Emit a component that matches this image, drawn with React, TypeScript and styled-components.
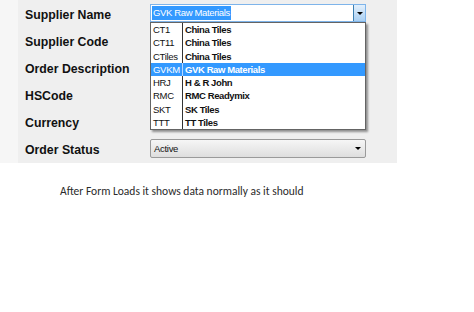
import React from 'react';
import styled, { createGlobalStyle } from 'styled-components';

const GlobalStyle = createGlobalStyle`
  html, body {
    margin: 0;
    padding: 0;
    background: #ffffff;
  }
  body {
    font-family: Arial, "Liberation Sans", sans-serif;
  }
`;

const sans = `Arial, "Liberation Sans", sans-serif`;

// Layout
const Page = styled.div`
  width: 474px;
  height: 312px;
  background: #ffffff;
  overflow: hidden;
`;

const Panel = styled.div`
  display: flex;
  width: 397px;
  height: 163px;
  background: #efefef;
`;

const Strip = styled.div`
  width: 18px;
  background: #f6f6f6;
`;

const Form = styled.div`
  display: grid;
  grid-template-columns: 125px 216px;
  grid-auto-rows: 27px;
  padding: 1px 0 0 7px;
`;

const Label = styled.div`
  display: flex;
  align-items: center;
  font-family: ${sans};
  font-weight: bold;
  font-size: 12.3px;
  color: #111111;
`;

const Field = styled.div`
  position: relative;
`;

// Supplier combo (open)
const Combo = styled.div`
  display: flex;
  align-items: center;
  margin-top: 3px;
  height: 16px;
  background: #ffffff;
  border: 1px solid #7eb4ea;
`;

const Selected = styled.span`
  flex: 1;
  display: flex;
  align-items: center;
`;

const SelText = styled.span`
  margin-left: 1px;
  padding: 0 1px;
  line-height: 14px;
  background: #3399ff;
  color: #ffffff;
  font-family: ${sans};
  font-size: 9.5px;
  letter-spacing: -0.35px;
`;

const DropButton = styled.span`
  width: 11px;
  height: 16px;
  display: flex;
  align-items: center;
  justify-content: center;
  border-left: 1px solid #3c7fb1;
  background: linear-gradient(#e3f0fc, #a9cff2);
`;

const Arrow = styled.span`
  width: 0;
  height: 0;
  border-left: 3px solid transparent;
  border-right: 3px solid transparent;
  border-top: 3px solid #000000;
`;

const List = styled.div`
  position: absolute;
  top: 21px;
  left: 0;
  width: 214px;
  border: 1px solid #646464;
  background: #ffffff;
  box-shadow: 2px 2px 2px rgba(0, 0, 0, 0.4);
  z-index: 2;
`;

const Item = styled.div<{ $active?: boolean }>`
  display: flex;
  height: 13.25px;
  line-height: 13.25px;
  font-family: ${sans};
  font-size: 9.5px;
  background: ${(p) => (p.$active ? '#3399ff' : '#ffffff')};
  color: ${(p) => (p.$active ? '#ffffff' : '#111111')};
`;

const Code = styled.span<{ $active?: boolean }>`
  width: 29px;
  padding-left: 2px;
  letter-spacing: -0.3px;
  border-right: 1px solid ${(p) => (p.$active ? '#b8d8ff' : '#333333')};
`;

const Name = styled.span`
  padding-left: 2px;
  font-weight: bold;
  letter-spacing: -0.4px;
`;

// Order status combo (closed)
const StatusCombo = styled.div`
  display: flex;
  align-items: center;
  justify-content: space-between;
  margin-top: 3px;
  height: 17px;
  padding: 0 4px 0 3px;
  border: 1px solid #9a9a9a;
  border-radius: 2px;
  background: linear-gradient(#f6f6f6, #dedede);
  font-family: ${sans};
  font-size: 9.5px;
  letter-spacing: -0.3px;
  color: #111111;
`;

const Caption = styled.p`
  margin: 21px 0 0 60px;
  font-family: Carlito, Calibri, Lato, "Liberation Sans", sans-serif;
  font-size: 11.5px;
  line-height: 14px;
  color: #2a2a2a;
`;

const suppliers = [
  { code: 'CT1', name: 'China Tiles' },
  { code: 'CT11', name: 'China Tiles' },
  { code: 'CTiles', name: 'China Tiles' },
  { code: 'GVKM', name: 'GVK Raw Materials' },
  { code: 'HRJ', name: 'H & R John' },
  { code: 'RMC', name: 'RMC Readymix' },
  { code: 'SKT', name: 'SK Tiles' },
  { code: 'TTT', name: 'TT Tiles' },
];

const App: React.FC = () => {
  const current = 'GVKM';

  return (
    <Page>
      <GlobalStyle />
      <Panel>
        <Strip />
        <Form>
          <Label>Supplier Name</Label>
          <Field>
            <Combo>
              <Selected>
                <SelText>GVK Raw Materials</SelText>
              </Selected>
              <DropButton>
                <Arrow />
              </DropButton>
            </Combo>
            <List>
              {suppliers.map((s) => (
                <Item key={s.code} $active={s.code === current}>
                  <Code $active={s.code === current}>{s.code}</Code>
                  <Name>{s.name}</Name>
                </Item>
              ))}
            </List>
          </Field>

          <Label>Supplier Code</Label>
          <Field />
          <Label>Order Description</Label>
          <Field />
          <Label>HSCode</Label>
          <Field />
          <Label>Currency</Label>
          <Field />

          <Label>Order Status</Label>
          <Field>
            <StatusCombo>
              Active
              <Arrow />
            </StatusCombo>
          </Field>
        </Form>
      </Panel>
      <Caption>After Form Loads it shows data normally as it should</Caption>
    </Page>
  );
};

export default App;
